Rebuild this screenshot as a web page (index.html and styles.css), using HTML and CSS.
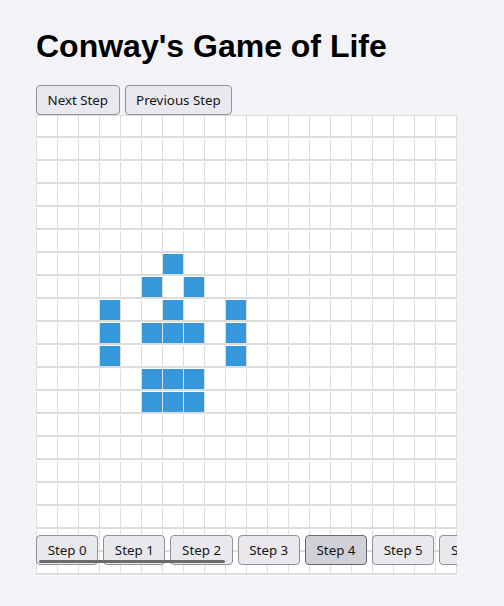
FILE: index.html
```html
<!DOCTYPE html>
<html lang="en">
<head>
<meta charset="utf-8">
<title>Conway's Game of Life</title>
<link rel="stylesheet" href="styles.css">
</head>
<body>
<div class="page">
  <h1>Conway's Game of Life</h1>
  <div class="controls">
    <button class="btn">Next Step</button>
    <button class="btn">Previous Step</button>
  </div>
  <div class="board-wrap">
    <div class="board">
      <div class="row"><span class="cell"></span><span class="cell"></span><span class="cell"></span><span class="cell"></span><span class="cell"></span><span class="cell"></span><span class="cell"></span><span class="cell"></span><span class="cell"></span><span class="cell"></span><span class="cell"></span><span class="cell"></span><span class="cell"></span><span class="cell"></span><span class="cell"></span><span class="cell"></span><span class="cell"></span><span class="cell"></span><span class="cell"></span><span class="cell"></span></div>
      <div class="row"><span class="cell"></span><span class="cell"></span><span class="cell"></span><span class="cell"></span><span class="cell"></span><span class="cell"></span><span class="cell"></span><span class="cell"></span><span class="cell"></span><span class="cell"></span><span class="cell"></span><span class="cell"></span><span class="cell"></span><span class="cell"></span><span class="cell"></span><span class="cell"></span><span class="cell"></span><span class="cell"></span><span class="cell"></span><span class="cell"></span></div>
      <div class="row"><span class="cell"></span><span class="cell"></span><span class="cell"></span><span class="cell"></span><span class="cell"></span><span class="cell"></span><span class="cell"></span><span class="cell"></span><span class="cell"></span><span class="cell"></span><span class="cell"></span><span class="cell"></span><span class="cell"></span><span class="cell"></span><span class="cell"></span><span class="cell"></span><span class="cell"></span><span class="cell"></span><span class="cell"></span><span class="cell"></span></div>
      <div class="row"><span class="cell"></span><span class="cell"></span><span class="cell"></span><span class="cell"></span><span class="cell"></span><span class="cell"></span><span class="cell"></span><span class="cell"></span><span class="cell"></span><span class="cell"></span><span class="cell"></span><span class="cell"></span><span class="cell"></span><span class="cell"></span><span class="cell"></span><span class="cell"></span><span class="cell"></span><span class="cell"></span><span class="cell"></span><span class="cell"></span></div>
      <div class="row"><span class="cell"></span><span class="cell"></span><span class="cell"></span><span class="cell"></span><span class="cell"></span><span class="cell"></span><span class="cell"></span><span class="cell"></span><span class="cell"></span><span class="cell"></span><span class="cell"></span><span class="cell"></span><span class="cell"></span><span class="cell"></span><span class="cell"></span><span class="cell"></span><span class="cell"></span><span class="cell"></span><span class="cell"></span><span class="cell"></span></div>
      <div class="row"><span class="cell"></span><span class="cell"></span><span class="cell"></span><span class="cell"></span><span class="cell"></span><span class="cell"></span><span class="cell"></span><span class="cell"></span><span class="cell"></span><span class="cell"></span><span class="cell"></span><span class="cell"></span><span class="cell"></span><span class="cell"></span><span class="cell"></span><span class="cell"></span><span class="cell"></span><span class="cell"></span><span class="cell"></span><span class="cell"></span></div>
      <div class="row"><span class="cell"></span><span class="cell"></span><span class="cell"></span><span class="cell"></span><span class="cell"></span><span class="cell"></span><span class="cell on"></span><span class="cell"></span><span class="cell"></span><span class="cell"></span><span class="cell"></span><span class="cell"></span><span class="cell"></span><span class="cell"></span><span class="cell"></span><span class="cell"></span><span class="cell"></span><span class="cell"></span><span class="cell"></span><span class="cell"></span></div>
      <div class="row"><span class="cell"></span><span class="cell"></span><span class="cell"></span><span class="cell"></span><span class="cell"></span><span class="cell on"></span><span class="cell"></span><span class="cell on"></span><span class="cell"></span><span class="cell"></span><span class="cell"></span><span class="cell"></span><span class="cell"></span><span class="cell"></span><span class="cell"></span><span class="cell"></span><span class="cell"></span><span class="cell"></span><span class="cell"></span><span class="cell"></span></div>
      <div class="row"><span class="cell"></span><span class="cell"></span><span class="cell"></span><span class="cell on"></span><span class="cell"></span><span class="cell"></span><span class="cell on"></span><span class="cell"></span><span class="cell"></span><span class="cell on"></span><span class="cell"></span><span class="cell"></span><span class="cell"></span><span class="cell"></span><span class="cell"></span><span class="cell"></span><span class="cell"></span><span class="cell"></span><span class="cell"></span><span class="cell"></span></div>
      <div class="row"><span class="cell"></span><span class="cell"></span><span class="cell"></span><span class="cell on"></span><span class="cell"></span><span class="cell on"></span><span class="cell on"></span><span class="cell on"></span><span class="cell"></span><span class="cell on"></span><span class="cell"></span><span class="cell"></span><span class="cell"></span><span class="cell"></span><span class="cell"></span><span class="cell"></span><span class="cell"></span><span class="cell"></span><span class="cell"></span><span class="cell"></span></div>
      <div class="row"><span class="cell"></span><span class="cell"></span><span class="cell"></span><span class="cell on"></span><span class="cell"></span><span class="cell"></span><span class="cell"></span><span class="cell"></span><span class="cell"></span><span class="cell on"></span><span class="cell"></span><span class="cell"></span><span class="cell"></span><span class="cell"></span><span class="cell"></span><span class="cell"></span><span class="cell"></span><span class="cell"></span><span class="cell"></span><span class="cell"></span></div>
      <div class="row"><span class="cell"></span><span class="cell"></span><span class="cell"></span><span class="cell"></span><span class="cell"></span><span class="cell on"></span><span class="cell on"></span><span class="cell on"></span><span class="cell"></span><span class="cell"></span><span class="cell"></span><span class="cell"></span><span class="cell"></span><span class="cell"></span><span class="cell"></span><span class="cell"></span><span class="cell"></span><span class="cell"></span><span class="cell"></span><span class="cell"></span></div>
      <div class="row"><span class="cell"></span><span class="cell"></span><span class="cell"></span><span class="cell"></span><span class="cell"></span><span class="cell on"></span><span class="cell on"></span><span class="cell on"></span><span class="cell"></span><span class="cell"></span><span class="cell"></span><span class="cell"></span><span class="cell"></span><span class="cell"></span><span class="cell"></span><span class="cell"></span><span class="cell"></span><span class="cell"></span><span class="cell"></span><span class="cell"></span></div>
      <div class="row"><span class="cell"></span><span class="cell"></span><span class="cell"></span><span class="cell"></span><span class="cell"></span><span class="cell"></span><span class="cell"></span><span class="cell"></span><span class="cell"></span><span class="cell"></span><span class="cell"></span><span class="cell"></span><span class="cell"></span><span class="cell"></span><span class="cell"></span><span class="cell"></span><span class="cell"></span><span class="cell"></span><span class="cell"></span><span class="cell"></span></div>
      <div class="row"><span class="cell"></span><span class="cell"></span><span class="cell"></span><span class="cell"></span><span class="cell"></span><span class="cell"></span><span class="cell"></span><span class="cell"></span><span class="cell"></span><span class="cell"></span><span class="cell"></span><span class="cell"></span><span class="cell"></span><span class="cell"></span><span class="cell"></span><span class="cell"></span><span class="cell"></span><span class="cell"></span><span class="cell"></span><span class="cell"></span></div>
      <div class="row"><span class="cell"></span><span class="cell"></span><span class="cell"></span><span class="cell"></span><span class="cell"></span><span class="cell"></span><span class="cell"></span><span class="cell"></span><span class="cell"></span><span class="cell"></span><span class="cell"></span><span class="cell"></span><span class="cell"></span><span class="cell"></span><span class="cell"></span><span class="cell"></span><span class="cell"></span><span class="cell"></span><span class="cell"></span><span class="cell"></span></div>
      <div class="row"><span class="cell"></span><span class="cell"></span><span class="cell"></span><span class="cell"></span><span class="cell"></span><span class="cell"></span><span class="cell"></span><span class="cell"></span><span class="cell"></span><span class="cell"></span><span class="cell"></span><span class="cell"></span><span class="cell"></span><span class="cell"></span><span class="cell"></span><span class="cell"></span><span class="cell"></span><span class="cell"></span><span class="cell"></span><span class="cell"></span></div>
      <div class="row"><span class="cell"></span><span class="cell"></span><span class="cell"></span><span class="cell"></span><span class="cell"></span><span class="cell"></span><span class="cell"></span><span class="cell"></span><span class="cell"></span><span class="cell"></span><span class="cell"></span><span class="cell"></span><span class="cell"></span><span class="cell"></span><span class="cell"></span><span class="cell"></span><span class="cell"></span><span class="cell"></span><span class="cell"></span><span class="cell"></span></div>
      <div class="row"><span class="cell"></span><span class="cell"></span><span class="cell"></span><span class="cell"></span><span class="cell"></span><span class="cell"></span><span class="cell"></span><span class="cell"></span><span class="cell"></span><span class="cell"></span><span class="cell"></span><span class="cell"></span><span class="cell"></span><span class="cell"></span><span class="cell"></span><span class="cell"></span><span class="cell"></span><span class="cell"></span><span class="cell"></span><span class="cell"></span></div>
      <div class="row"><span class="cell"></span><span class="cell"></span><span class="cell"></span><span class="cell"></span><span class="cell"></span><span class="cell"></span><span class="cell"></span><span class="cell"></span><span class="cell"></span><span class="cell"></span><span class="cell"></span><span class="cell"></span><span class="cell"></span><span class="cell"></span><span class="cell"></span><span class="cell"></span><span class="cell"></span><span class="cell"></span><span class="cell"></span><span class="cell"></span></div>
    </div>
    <div class="steps">
      <button class="btn">Step 0</button>
      <button class="btn">Step 1</button>
      <button class="btn">Step 2</button>
      <button class="btn">Step 3</button>
      <button class="btn active">Step 4</button>
      <button class="btn">Step 5</button>
      <button class="btn">Step 6</button>
      <span class="thumb"></span>
    </div>
  </div>
</div>
</body>
</html>
```

FILE: styles.css
```css
html, body {
  margin: 0;
  padding: 0;
  background: #f3f3f7;
}

body {
  font-family: "Liberation Sans", Arial, sans-serif;
  color: #000;
}

.page {
  padding: 28px 36px;
}

h1 {
  margin: 0 0 20px;
  font-size: 32px;
  line-height: 37px;
  font-weight: bold;
}

.controls {
  display: flex;
  gap: 5px;
}

.btn {
  flex: none;
  font-family: "Noto Sans", "Open Sans", sans-serif;
  font-size: 13.33px;
  line-height: 18px;
  padding: 5px 10.5px;
  border: 1px solid #8f8f9d;
  border-radius: 4px;
  background: #e9e9ed;
  color: #15141a;
  white-space: nowrap;
}

.steps .btn {
  padding: 5px 10.65px;
}

.btn.active {
  background: #d0d0d7;
  border-color: #676774;
}

.board-wrap {
  position: relative;
  width: 421px;
}

.board {
  background: #dcdcdc;
  padding-top: 1px;
}

.row {
  display: flex;
  gap: 1px;
  padding: 0 1px 2px;
  border-bottom: 1px solid #fff;
}

.cell {
  width: 20px;
  height: 20px;
  background: #fff;
}

.cell.on {
  background: #3498db;
}

.steps {
  position: absolute;
  left: 0;
  top: 420px;
  width: 421px;
  height: 30px;
  overflow: hidden;
  display: flex;
  gap: 5px;
}

.thumb {
  position: absolute;
  left: 3px;
  top: 25px;
  width: 186px;
  height: 3px;
  border-radius: 2px;
  background: #6b6b6b;
}
```
